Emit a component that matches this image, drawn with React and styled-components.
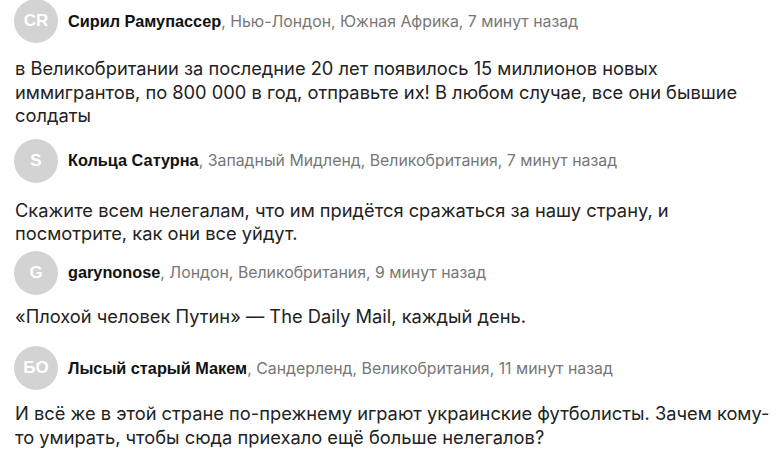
import React from "react";
import styled, { createGlobalStyle } from "styled-components";

const Global = createGlobalStyle`
  html, body { margin: 0; padding: 0; background: #fff; }
  body { font-family: Inter, "Noto Sans", sans-serif; -webkit-font-smoothing: antialiased; }
`;

const Feed = styled.div`
  width: 780px;
  height: 467px;
  overflow: hidden;
  box-sizing: border-box;
  padding: 0 4px 0 14px;
  background: #fff;
`;

const Comment = styled.article`
  margin-top: ${(p) => p.$top}px;
`;

const Header = styled.div`
  display: flex;
  align-items: center;
  height: 44px;
`;

const Avatar = styled.div`
  flex: 0 0 44px;
  width: 44px;
  height: 44px;
  border-radius: 50%;
  background: #d3d3d3;
  color: #fff;
  display: flex;
  align-items: center;
  justify-content: center;
  font-family: "Liberation Sans", Arial, sans-serif;
  font-weight: 700;
  font-size: 17px;
  margin-right: 10px;
`;

const Byline = styled.div`
  font-size: 15.85px;
  color: #777;
  white-space: nowrap;
`;

const Name = styled.span`
  font-family: "Liberation Sans", Arial, sans-serif;
  font-weight: 700;
  font-size: 16.3px;
  color: #111;
`;

const Body = styled.p`
  margin: ${(p) => p.$gap}px 0 0 1px;
  font-size: 18.3px;
  line-height: 23.5px;
  color: #222;
`;

const comments = [
  {
    initials: "CR",
    name: "Сирил Рамупассер",
    meta: "Нью-Лондон, Южная Африка, 7 минут назад",
    text: "в Великобритании за последние 20 лет появилось 15 миллионов новых иммигрантов, по 800 000 в год, отправьте их! В любом случае, все они бывшие солдаты",
    top: -1,
    gap: 14,
  },
  {
    initials: "S",
    name: "Кольца Сатурна",
    meta: "Западный Мидленд, Великобритания, 7 минут назад",
    text: "Скажите всем нелегалам, что им придётся сражаться за нашу страну, и посмотрите, как они все уйдут.",
    top: 11,
    gap: 16,
  },
  {
    initials: "G",
    name: "garynonose",
    meta: "Лондон, Великобритания, 9 минут назад",
    text: "«Плохой человек Путин» — The Daily Mail, каждый день.",
    top: 5,
    gap: 10,
  },
  {
    initials: "БО",
    name: "Лысый старый Макем",
    meta: "Сандерленд, Великобритания, 11 минут назад",
    text: "И всё же в этой стране по-прежнему играют украинские футболисты. Зачем кому-то умирать, чтобы сюда приехало ещё больше нелегалов?",
    top: 18,
    gap: 12,
  },
];

export default function App() {
  return (
    <>
      <Global />
      <Feed>
        {comments.map((c) => (
          <Comment key={c.name} $top={c.top}>
            <Header>
              <Avatar>{c.initials}</Avatar>
              <Byline>
                <Name>{c.name}</Name>, {c.meta}
              </Byline>
            </Header>
            <Body $gap={c.gap}>{c.text}</Body>
          </Comment>
        ))}
      </Feed>
    </>
  );
}
